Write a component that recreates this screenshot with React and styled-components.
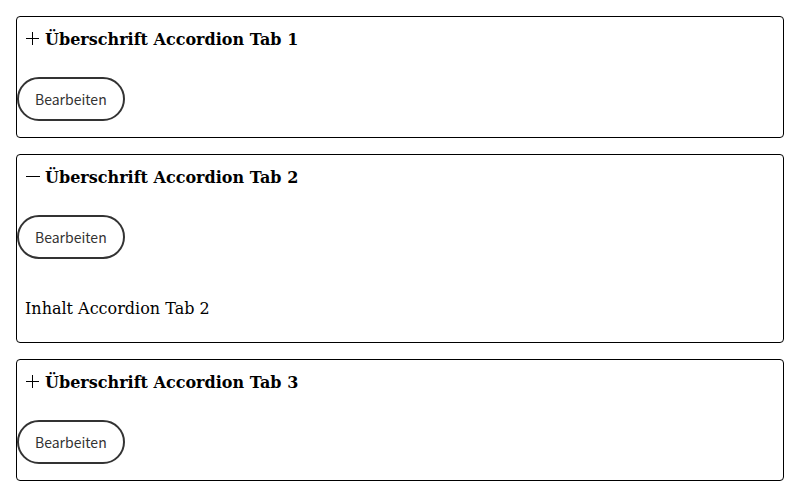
import React, { useState } from "react";
import styled, { createGlobalStyle } from "styled-components";

const GlobalStyle = createGlobalStyle`
  body {
    margin: 0;
    background: #fff;
    color: #000;
    font: 16px/24px "DejaVu Serif", serif;
  }
`;

const Accordion = styled.main`
  display: flex;
  flex-direction: column;
  gap: 16px;
  padding: 16px;
`;

const Panel = styled.section`
  border: 1px solid #000;
  border-radius: 4px;
  padding-bottom: 16px;
`;

const Heading = styled.h2`
  margin: 0 0 14px;
  font: inherit;
`;

const Toggle = styled.button`
  display: flex;
  align-items: center;
  gap: 4px;
  width: 100%;
  padding: 8px;
  border: 0;
  background: none;
  color: inherit;
  font: inherit;
  line-height: 30px;
  font-weight: 700;
  text-align: left;
  cursor: pointer;
`;

const Icon = styled.svg`
  flex: none;
  width: 16px;
  height: 16px;
`;

const EditButton = styled.button`
  display: block;
  padding: 8px 16px;
  border: 2px solid #333;
  border-radius: 22px;
  background: #fff;
  color: #333;
  font: 14px/24px "Noto Sans CJK JP", sans-serif;
  cursor: pointer;
`;

const Content = styled.div`
  padding: 38px 8px 5px;
`;

const tabs = [
  { id: 1, title: "Überschrift Accordion Tab 1", text: "Inhalt Accordion Tab 1" },
  { id: 2, title: "Überschrift Accordion Tab 2", text: "Inhalt Accordion Tab 2" },
  { id: 3, title: "Überschrift Accordion Tab 3", text: "Inhalt Accordion Tab 3" },
];

export default function App() {
  const [openId, setOpenId] = useState(2);
  return (
    <>
      <GlobalStyle />
      <Accordion>
        {tabs.map(({ id, title, text }) => {
          const open = openId === id;
          return (
            <Panel key={id}>
              <Heading>
                <Toggle aria-expanded={open} onClick={() => setOpenId(open ? null : id)}>
                  <Icon viewBox="0 0 16 16" aria-hidden="true">
                    <path d={open ? "M1 6.5h14" : "M1 6.5h13M7.5 0v13"} stroke="#000" />
                  </Icon>
                  {title}
                </Toggle>
              </Heading>
              <EditButton>Bearbeiten</EditButton>
              {open && <Content>{text}</Content>}
            </Panel>
          );
        })}
      </Accordion>
    </>
  );
}
